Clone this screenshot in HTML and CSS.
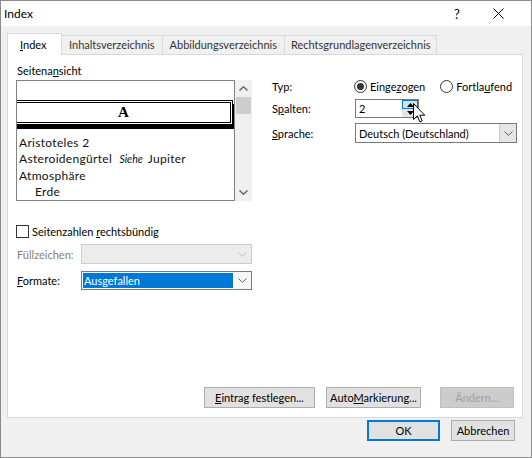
FILE: index.html
```html
<!DOCTYPE html>
<html lang="de">
<head>
<meta charset="utf-8">
<title>Index</title>
<link rel="stylesheet" href="styles.css">
</head>
<body>
<div class="window">
  <div class="titlebar">
    <span class="title">Index</span>
    <span class="help">?</span>
    <span class="close"><svg width="11" height="11" viewBox="0 0 11 11"><path d="M0.5 0.5 L10.5 10.5 M10.5 0.5 L0.5 10.5" stroke="#000" stroke-width="1" fill="none"/></svg></span>
  </div>
  <div class="tabs">
    <div class="tab active"><u>I</u>ndex</div>
    <div class="tab">Inhaltsverzeichnis</div>
    <div class="tab">Abbildungsverzeichnis</div>
    <div class="tab">Rechtsgrundlagenverzeichnis</div>
  </div>
  <div class="panel">
    <div class="top">
      <div class="left">
        <div class="label">Seitena<u>n</u>sicht</div>
        <div class="preview">
          <div class="pv">
            <div class="pv-blank"></div>
            <div class="pv-head">A</div>
            <div class="pv-list">
              <div class="pv-entry">Aristoteles 2</div>
              <div class="pv-entry">Asteroidengürtel <i class="see">Siehe</i> Jupiter</div>
              <div class="pv-entry">Atmosphäre</div>
              <div class="pv-entry sub">Erde</div>
            </div>
          </div>
          <div class="sb">
            <svg class="sb-arrow" width="9" height="5" viewBox="0 0 9 5"><path d="M0.5 4.5 L4.5 0.8 L8.5 4.5" stroke="#606060" stroke-width="1.4" fill="none"/></svg>
            <div class="sb-thumb"></div>
            <div class="sb-fill"></div>
            <svg class="sb-arrow" width="9" height="5" viewBox="0 0 9 5"><path d="M0.5 0.5 L4.5 4.2 L8.5 0.5" stroke="#606060" stroke-width="1.4" fill="none"/></svg>
          </div>
        </div>
      </div>
      <div class="right">
        <div class="row row-typ">
          <span class="rlabel">Typ:</span>
          <span class="radio checked"></span><span class="rtext">Einge<u>z</u>ogen</span>
          <span class="radio second"></span><span class="rtext">Fortla<u>u</u>fend</span>
        </div>
        <div class="row row-spalten">
          <span class="rlabel">S<u>p</u>alten:</span>
          <div class="spin">
            <span class="spin-val">2</span>
            <div class="spin-btns">
              <div class="spin-up"><svg width="7" height="4" viewBox="0 0 7 4"><path d="M0 4 L3.5 0 L7 4 Z" fill="#000"/></svg></div>
              <div class="spin-down"><svg width="7" height="4" viewBox="0 0 7 4"><path d="M0 0 L3.5 4 L7 0 Z" fill="#000"/></svg></div>
            </div>
          </div>
        </div>
        <div class="row row-sprache">
          <span class="rlabel"><u>S</u>prache:</span>
          <div class="combo wide">
            <span class="combo-text">Deutsch (Deutschland)</span>
            <span class="combo-btn"><svg width="9" height="5" viewBox="0 0 9 5"><path d="M0.5 0.5 L4.5 4.3 L8.5 0.5" stroke="#606060" stroke-width="1" fill="none"/></svg></span>
          </div>
        </div>
      </div>
    </div>
    <div class="lower">
      <div class="check-row">
        <span class="checkbox"></span><span class="ctext">Seitenzahlen <u>r</u>echtsbündig</span>
      </div>
      <div class="frow frow-fuell">
        <span class="flabel disabled">Füllzeichen:</span>
        <div class="combo narrow disabled-combo">
          <span class="combo-text"></span>
          <span class="combo-btn"><svg width="9" height="5" viewBox="0 0 9 5"><path d="M0.5 0.5 L4.5 4.3 L8.5 0.5" stroke="#bfbfbf" stroke-width="1" fill="none"/></svg></span>
        </div>
      </div>
      <div class="frow frow-formate">
        <span class="flabel"><u>F</u>ormate:</span>
        <div class="combo narrow">
          <span class="combo-text"><span class="sel">Ausgefallen</span></span>
          <span class="combo-btn"><svg width="9" height="5" viewBox="0 0 9 5"><path d="M0.5 0.5 L4.5 4.3 L8.5 0.5" stroke="#606060" stroke-width="1" fill="none"/></svg></span>
        </div>
      </div>
    </div>
    <div class="btnrow">
      <button class="btn b-eintrag"><u>E</u>intrag festlegen...</button>
      <button class="btn b-auto">Auto<u>M</u>arkierung...</button>
      <button class="btn b-aendern" disabled>Ändern...</button>
    </div>
  </div>
  <div class="footer">
    <button class="btn b-ok">OK</button>
    <button class="btn b-cancel">Abbrechen</button>
  </div>
  <svg class="cursor" width="13" height="20" viewBox="0 0 13 20"><path d="M0.5 0.5 L0.5 16.5 L4.3 12.9 L6.8 18.8 L9.2 17.8 L6.8 12.2 L11.8 12.2 Z" fill="#fff" stroke="#000" stroke-width="1" stroke-linejoin="miter"/></svg>
</div>
</body>
</html>
```

FILE: styles.css
```css
* { box-sizing: border-box; }
html, body { margin: 0; padding: 0; }
body { width: 532px; height: 458px; overflow: hidden; background: #f0f0f0; }
u { text-decoration: underline; text-underline-offset: 1px; }

.window {
  position: relative;
  width: 532px;
  height: 458px;
  border: 1px solid #8c8c8c;
  background: #f0f0f0;
  display: flex;
  flex-direction: column;
  font-family: Lato, "Liberation Sans", sans-serif;
  font-size: 11px;
  color: #000;
}

.titlebar {
  height: 25px;
  background: #fff;
  display: flex;
  align-items: center;
  padding-left: 3px;
  flex-shrink: 0;
}
.title { font-size: 12px; flex: 1; }
.help { font-size: 13px; width: 14px; margin-right: 29px; text-align: center; }
.close { width: 11px; height: 11px; margin-right: 27px; display: flex; }

.tabs {
  display: flex;
  align-items: flex-end;
  height: 21px;
  margin-top: 7px;
  margin-left: 6px;
  position: relative;
  z-index: 1;
  flex-shrink: 0;
}
.tab {
  height: 19px;
  border: 1px solid #d9d9d9;
  border-bottom: none;
  background: #f0f0f0;
  color: #333;
  padding: 0 7px;
  line-height: 17px;
  margin-left: -1px;
  white-space: nowrap;
}
.tab:last-child { padding: 0 5px 0 6px; }
.tab.active {
  width: 55px;
  height: 22px;
  margin-left: 0;
  margin-bottom: -1px;
  background: #fff;
  color: #000;
  line-height: 21px;
  padding: 0 0 0 12px;
  position: relative;
  z-index: 2;
}

.panel {
  height: 364px;
  margin: 0 8px 0 6px;
  border: 1px solid #d9d9d9;
  background: #fff;
  display: flex;
  flex-direction: column;
  padding: 8px 8px 9px 8px;
  flex-shrink: 0;
}

.top { display: flex; }
.left { width: 236px; }
.label { height: 16px; line-height: 16px; padding-left: 1px; }
.preview { display: flex; margin-top: 1px; height: 121px; }
.pv {
  width: 219px;
  height: 121px;
  border: 1px solid #828282;
  overflow: hidden;
  background: #fff;
}
.pv-blank { height: 19px; }
.pv-head {
  margin-left: -3px;
  width: 219px;
  height: 25px;
  border: 3px double #000;
  box-shadow: 3px 4px 0 #000;
  font-family: "Liberation Serif", serif;
  font-weight: bold;
  font-size: 15px;
  line-height: 19px;
  text-align: center;
}
.pv-list { margin-top: 10px; padding-left: 2px; }
.pv-entry {
  height: 16.3px;
  line-height: 16.3px;
  font-family: Lato, sans-serif;
  font-size: 12px;
  letter-spacing: 0.3px;
  white-space: nowrap;
  color: #111;
}
.pv-entry.sub { padding-left: 16px; }
.see { font-size: 10.5px; letter-spacing: 0; margin: 0 2px 0 4px; }

.sb {
  width: 17px;
  height: 121px;
  background: #f0f0f0;
  display: flex;
  flex-direction: column;
  align-items: center;
}
.sb-arrow { margin-top: 6px; flex-shrink: 0; }
.sb-arrow:last-child { margin-top: 0; margin-bottom: 6px; }
.sb-thumb { width: 15px; height: 17px; background: #cdcdcd; margin-top: 6px; flex-shrink: 0; }
.sb-fill { flex: 1; }

.right { margin-left: 20px; padding-top: 15px; flex: 1; }
.row { display: flex; align-items: center; }
.rlabel { width: 83px; flex-shrink: 0; }
.row-typ { height: 16px; }
.row-spalten { margin-top: 5px; height: 19px; }
.row-sprache { margin-top: 5px; height: 20px; }

.radio {
  width: 13px;
  height: 13px;
  border: 1px solid #333;
  border-radius: 50%;
  background: #fff;
  flex-shrink: 0;
  position: relative;
  margin-left: -1px;
}
.radio.checked::after {
  content: "";
  position: absolute;
  left: 2px; top: 2px;
  width: 7px; height: 7px;
  border-radius: 50%;
  background: #333;
}
.radio.second { margin-left: 15px; }
.rtext { margin-left: 3px; white-space: nowrap; }

.spin {
  width: 64px;
  height: 19px;
  border: 1px solid #7a7a7a;
  background: #fff;
  display: flex;
  align-items: center;
}
.spin-val { flex: 1; padding-left: 3px; }
.spin-btns { width: 16px; height: 17px; display: flex; flex-direction: column; }
.spin-up {
  height: 9px;
  background: #cce4f7;
  border: 1px solid #0078d7;
  display: flex; align-items: center; justify-content: center;
}
.spin-down {
  height: 8px;
  background: #e5e5e5;
  display: flex; align-items: center; justify-content: center;
}

.combo {
  height: 100%;
  border: 1px solid #7a7a7a;
  background: #fff;
  display: flex;
  align-items: stretch;
}
.combo.wide { width: 162px; height: 20px; }
.combo-text { flex: 1; padding-left: 3px; display: flex; align-items: center; white-space: nowrap; }
.combo-btn {
  width: 17px;
  background: #e5e5e5;
  border-left: 1px solid #cccccc;
  display: flex; align-items: center; justify-content: center;
}

.lower { margin-top: 24px; }
.check-row { display: flex; align-items: center; height: 13px; }
.checkbox { width: 13px; height: 13px; border: 1px solid #333; background: #fff; flex-shrink: 0; }
.ctext { margin-left: 3px; white-space: nowrap; line-height: 13px; }

.frow { display: flex; align-items: center; height: 20px; }
.frow-fuell { margin-top: 6px; }
.frow-formate { margin-top: 7px; height: 19px; }
.flabel { width: 65px; padding-left: 1px; flex-shrink: 0; }
.flabel.disabled { color: #7f7f7f; }
.combo.narrow { width: 171px; }
.disabled-combo { background: #ececec; border-color: #cccccc; }
.disabled-combo .combo-btn { background: #ececec; border-left: none; }
.frow-formate .combo-text { padding: 1px 1px; }
.sel {
  display: flex;
  align-items: center;
  width: 100%;
  height: 100%;
  padding-left: 1px;
  background: #0078d7;
  color: #fff;
}
.frow-formate .combo-btn { background: #f7f7f7; border-left: none; }

.btnrow {
  margin-top: auto;
  display: flex;
  justify-content: flex-end;
}
.btn {
  font-family: inherit;
  font-size: inherit;
  color: #000;
  height: 21px;
  padding: 0;
  border: 1px solid #adadad;
  background: #e1e1e1;
  white-space: nowrap;
  line-height: 17px;
}
.b-eintrag { width: 111px; }
.b-auto { width: 95px; margin-left: 11px; }
.b-aendern { width: 74px; margin-left: 19px; background: #cccccc; border-color: #bfbfbf; color: #a0a0a0; }

.footer {
  display: flex;
  justify-content: flex-end;
  padding-right: 16px;
  margin-top: 2px;
}
.b-ok { width: 73px; border: 2px solid #0078d7; }
.b-cancel { width: 64px; margin-left: 11px; }

.cursor { position: absolute; left: 412px; top: 102px; }
```
